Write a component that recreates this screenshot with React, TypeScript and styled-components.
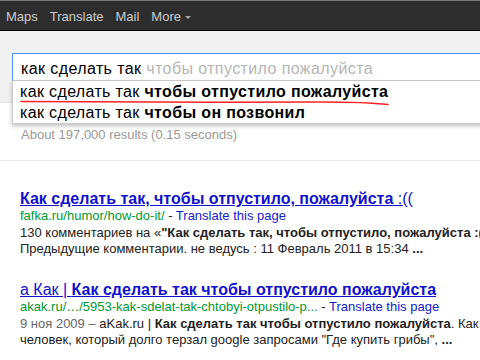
import styled, { createGlobalStyle } from 'styled-components';

const GlobalStyle = createGlobalStyle`
  html, body {
    margin: 0;
    padding: 0;
    background: #fff;
    overflow: hidden;
  }
  body {
    font-family: "Liberation Sans", Arial, sans-serif;
    color: #222;
  }
`;

const TopBar = styled.div`
  height: 28px;
  border-top: 1px solid #777;
  border-bottom: 1px solid #000;
  background: #2d2d2d;
  display: flex;
  align-items: center;
  padding-top: 1px;
  box-sizing: content-box;
`;

const NavItem = styled.span`
  color: #ccc;
  font-size: 13px;
  padding: 0 6px;
  display: inline-flex;
  align-items: center;
`;

const Caret = styled.i`
  display: inline-block;
  margin-left: 4px;
  margin-top: 2px;
  border-left: 3px solid transparent;
  border-right: 3px solid transparent;
  border-top: 3px solid #aaa;
`;

const Header = styled.div`
  background: #f1f1f1;
  height: 49px;
  padding-top: 22px;
  border-bottom: 1px solid #e5e5e5;
`;

const SearchWrap = styled.div`
  position: relative;
  margin-left: 12px;
  width: 540px;
`;

const SearchInput = styled.div`
  height: 23px;
  padding: 3px 0 0 8px;
  border: 1px solid #4d90fe;
  border-bottom: 1px solid #ccc;
  background: #fff;
  font-size: 16px;
  line-height: 23px;
  letter-spacing: 0.4px;
  color: #000;
  white-space: nowrap;
`;

const Hint = styled.span`
  color: #b5b5b5;
`;

const Dropdown = styled.div`
  position: absolute;
  top: 100%;
  left: 0;
  right: 0;
  background: #fff;
  border: 1px solid #ccc;
  border-top: none;
  box-shadow: 0 2px 4px rgba(0, 0, 0, 0.25);
  z-index: 2;
`;

const Suggestion = styled.div`
  position: relative;
  padding-left: 7px;
  font-size: 16px;
  line-height: 21px;
  letter-spacing: 0.35px;
  color: #000;
  white-space: nowrap;

  b {
    font-weight: bold;
  }
`;

const Scribble = styled.svg`
  position: absolute;
  left: 7px;
  top: 18px;
  pointer-events: none;
`;

const Stats = styled.div`
  margin-top: 24px;
  padding-left: 21px;
  font-size: 13px;
  line-height: 16px;
  color: #999;
`;

const Rule = styled.div`
  margin-top: 17px;
  height: 1px;
  background: #e5e5e5;
`;

const Results = styled.div`
  padding: 29px 0 0 20px;
`;

const Result = styled.div`
  margin-bottom: 25px;
  white-space: nowrap;
`;

const Title = styled.a`
  display: block;
  font-size: 16px;
  line-height: 18px;
  color: #11c;
  text-decoration: underline;

  b {
    font-weight: bold;
  }
`;

const UrlLine = styled.div`
  font-size: 13px;
  line-height: 15px;
`;

const Cite = styled.span`
  color: #093;
`;

const Translate = styled.span`
  color: #12c;
`;

const Snippet = styled.div`
  margin-top: 2px;
  font-size: 13px;
  line-height: 15.6px;
  color: #222;

  b {
    font-weight: bold;
  }
`;

const Date = styled.span`
  color: #666;
`;

export default () => {
  return (
    <>
      <GlobalStyle />
      <TopBar>
        <NavItem>Maps</NavItem>
        <NavItem>Translate</NavItem>
        <NavItem>Mail</NavItem>
        <NavItem>
          More
          <Caret />
        </NavItem>
      </TopBar>

      <Header>
        <SearchWrap>
          <SearchInput>
            как сделать так <Hint>чтобы отпустило пожалуйста</Hint>
          </SearchInput>
          <Dropdown>
            <Suggestion>
              как сделать так <b>чтобы отпустило пожалуйста</b>
              <Scribble width="372" height="8" viewBox="0 0 372 8">
                <path
                  d="M1 2.5 C 80 3.5, 200 3.5, 300 3 C 330 3, 355 4, 368 5.5"
                  fill="none"
                  stroke="#f22"
                  strokeWidth="1.6"
                  strokeLinecap="round"
                />
              </Scribble>
            </Suggestion>
            <Suggestion>
              как сделать так <b>чтобы он позвонил</b>
            </Suggestion>
          </Dropdown>
        </SearchWrap>
      </Header>

      <Stats>About 197,000 results (0.15 seconds)</Stats>
      <Rule />

      <Results>
        <Result>
          <Title>
            <b>Как сделать так, чтобы отпустило, пожалуйста</b> :((
          </Title>
          <UrlLine>
            <Cite>fafka.ru/humor/how-do-it/</Cite> - <Translate>Translate this page</Translate>
          </UrlLine>
          <Snippet>
            130 комментариев на «<b>"Как сделать так, чтобы отпустило, пожалуйста :((</b>
            <br />
            Предыдущие комментарии. не ведусь : 11 Февраль 2011 в 15:34 <b>...</b>
          </Snippet>
        </Result>

        <Result>
          <Title>
            а Как | <b>Как сделать так чтобы отпустило пожалуйста</b>
          </Title>
          <UrlLine>
            <Cite>akak.ru/…/5953-kak-sdelat-tak-chtobyi-otpustilo-p...</Cite> -{' '}
            <Translate>Translate this page</Translate>
          </UrlLine>
          <Snippet>
            <Date>9 ноя 2009 – </Date>aKak.ru | <b>Как сделать так чтобы отпустило пожалуйста</b>. Как
            <br />
            человек, который долго терзал google запросами "Где купить грибы", <b>...</b>
          </Snippet>
        </Result>
      </Results>
    </>
  );
};
